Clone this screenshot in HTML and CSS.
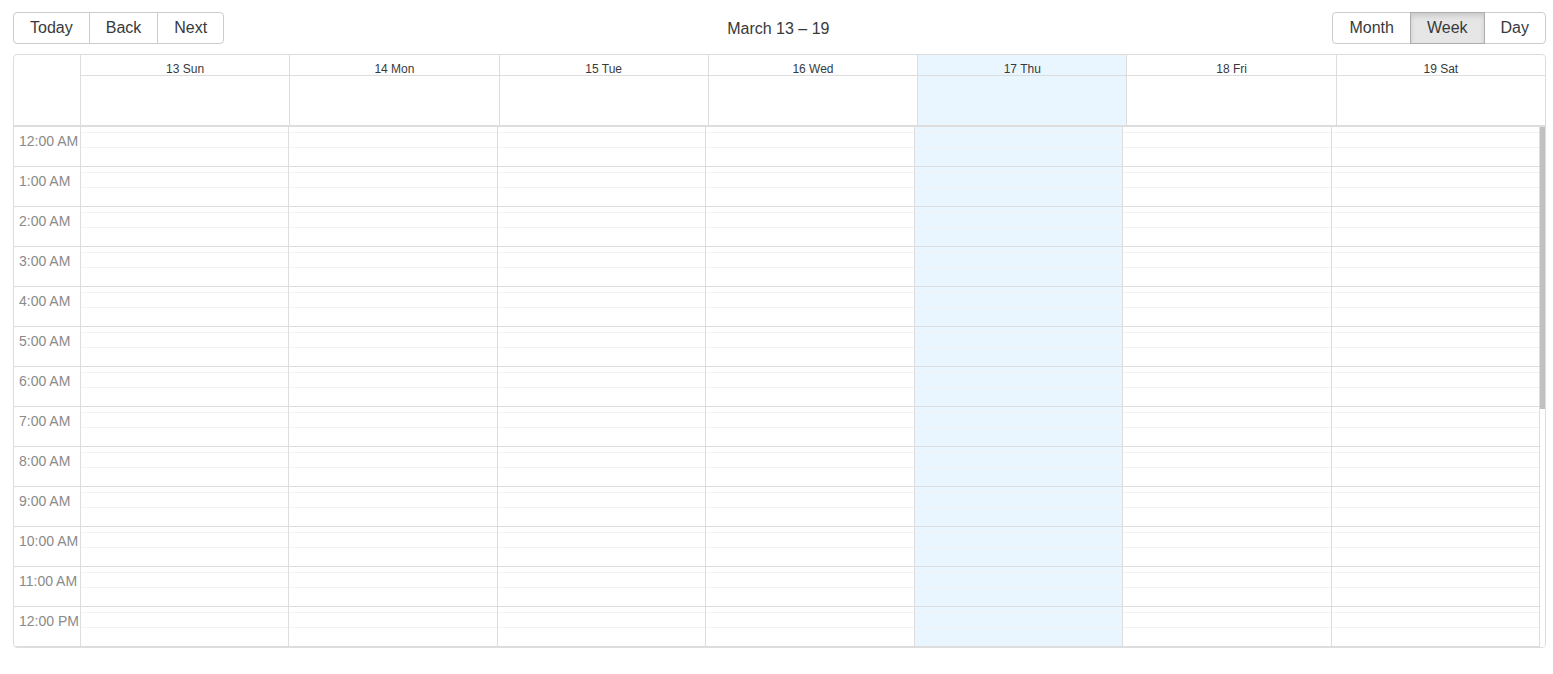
FILE: index.html
```html
<!DOCTYPE html>
<html lang="en">
<head>
  <meta charset="UTF-8">
  <meta name="viewport" content="width=device-width, initial-scale=1.0">
  <title>calendar</title>
  <link rel="stylesheet" href="styles.css">
</head>
<body>
  <div class="app">
    <div class="toolbar">
      <div class="btn-group">
        <button>Today</button>
        <button>Back</button>
        <button>Next</button>
      </div>
      <span class="toolbar-label">March 13 – 19</span>
      <div class="btn-group">
        <button>Month</button>
        <button class="active">Week</button>
        <button>Day</button>
      </div>
    </div>

    <div class="calendar">
      <div class="time-header">
        <div class="header-gutter"></div>
        <div class="header-cols"></div>
      </div>
      <div class="time-body">
        <div class="time-content">
          <div class="gutter"></div>
        </div>
        <div class="scrollbar"><div class="thumb"></div></div>
      </div>
    </div>
  </div>

  <script>
  const days = ['13 Sun', '14 Mon', '15 Tue', '16 Wed', '17 Thu', '18 Fri', '19 Sat'];
  const todayIndex = 4;
  // rows that fit in the visible part of the day
  const visibleHours = 13;
  const headerCols = document.querySelector('.header-cols');
  const content = document.querySelector('.time-content');
  const gutter = document.querySelector('.gutter');

  days.forEach((day, i) => {
    const col = document.createElement('div');
    col.className = 'header-col' + (i === todayIndex ? ' today' : '');
    col.innerHTML = `<div class="header-label">${day}</div><div class="allday"></div>`;
    headerCols.appendChild(col);
  });

  function hourLabel(h) {
    const suffix = h < 12 ? 'AM' : 'PM';
    const hour = h % 12 === 0 ? 12 : h % 12;
    return `${hour}:00 ${suffix}`;
  }

  for (let h = 0; h < visibleHours; h++) {
    gutter.innerHTML += `<div class="group"><span class="time-label">${hourLabel(h)}</span></div>`;
  }

  days.forEach((day, i) => {
    const col = document.createElement('div');
    col.className = 'day-col' + (i === todayIndex ? ' today' : '');
    let html = '';
    for (let h = 0; h < visibleHours; h++) {
      html += '<div class="group"><div class="slot first"></div><div class="slot"></div></div>';
    }
    col.innerHTML = html;
    content.appendChild(col);
  });
  </script>
</body>
</html>
```

FILE: styles.css
```css
body{
  margin: 0;
  background-color: white;
  font-family: "Liberation Sans", Arial, Helvetica, sans-serif;
  color: #373a3c;
}
.app{
  padding: 12px 7px 0 13px;
}

/* toolbar */
.toolbar{
  display: flex;
  align-items: center;
  margin-bottom: 10px;
}
.toolbar-label{
  flex: 1;
  text-align: center;
  font-size: 16px;
  padding: 2px 10px 0;
}
.btn-group{
  display: flex;
}
.btn-group button{
  font-family: inherit;
  font-size: 16px;
  line-height: 18px;
  color: #373a3c;
  background: white;
  border: 1px solid #ccc;
  padding: 6px 16px;
  margin: 0;
  cursor: pointer;
}
.btn-group button + button{
  margin-left: -1px;
}
.btn-group button:first-child{
  border-radius: 4px 0 0 4px;
}
.btn-group button:last-child{
  border-radius: 0 4px 4px 0;
}
.btn-group button.active{
  background-color: #e6e6e6;
  border-color: #adadad;
  box-shadow: inset 0 3px 5px rgba(0,0,0,.125);
  position: relative;
}

/* calendar */
.calendar{
  border: 1px solid #ddd;
  border-radius: 4px;
  overflow: hidden;
}
.time-header{
  display: flex;
}
.header-gutter{
  width: 66px;
}
.header-cols{
  flex: 1;
  display: flex;
  border-left: 1px solid #ddd;
}
.header-col{
  flex: 1;
  min-width: 0;
}
.header-col + .header-col{
  border-left: 1px solid #ddd;
}
.header-col.today{
  background-color: #eaf6ff;
}
.header-label{
  height: 21px;
  box-sizing: border-box;
  padding-top: 7px;
  line-height: 14px;
  font-size: 12px;
  text-align: center;
  border-bottom: 1px solid #ddd;
}
.allday{
  height: 49px;
}

.time-body{
  display: flex;
  height: 520px;
  border-top: 2px solid #ddd;
}
.time-content{
  flex: 1;
  display: flex;
  align-items: flex-start;
  overflow: hidden;
}
.scrollbar{
  width: 5px;
  border-left: 1px solid #ddd;
  background: white;
}
.thumb{
  height: 282px;
  background: #c1c1c1;
}
.gutter{
  width: 66px;
  flex-shrink: 0;
}
.day-col{
  flex: 1;
  min-width: 0;
  border-left: 1px solid #ddd;
}
.day-col.today{
  background-color: #eaf6ff;
}
.group{
  height: 40px;
  box-sizing: border-box;
  border-bottom: 1px solid #ddd;
  display: flex;
  flex-direction: column;
}
.day-col .group{
  padding-top: 5px;
}
.slot{
  flex: 1;
  border-top: 1px solid #f2f2f2;
}
.slot.first{
  flex: none;
  height: 14px;
}
.time-label{
  display: block;
  padding: 5px 5px 0;
  font-size: 14px;
  line-height: 18px;
  color: #8a8a8a;
  white-space: nowrap;
}
```
